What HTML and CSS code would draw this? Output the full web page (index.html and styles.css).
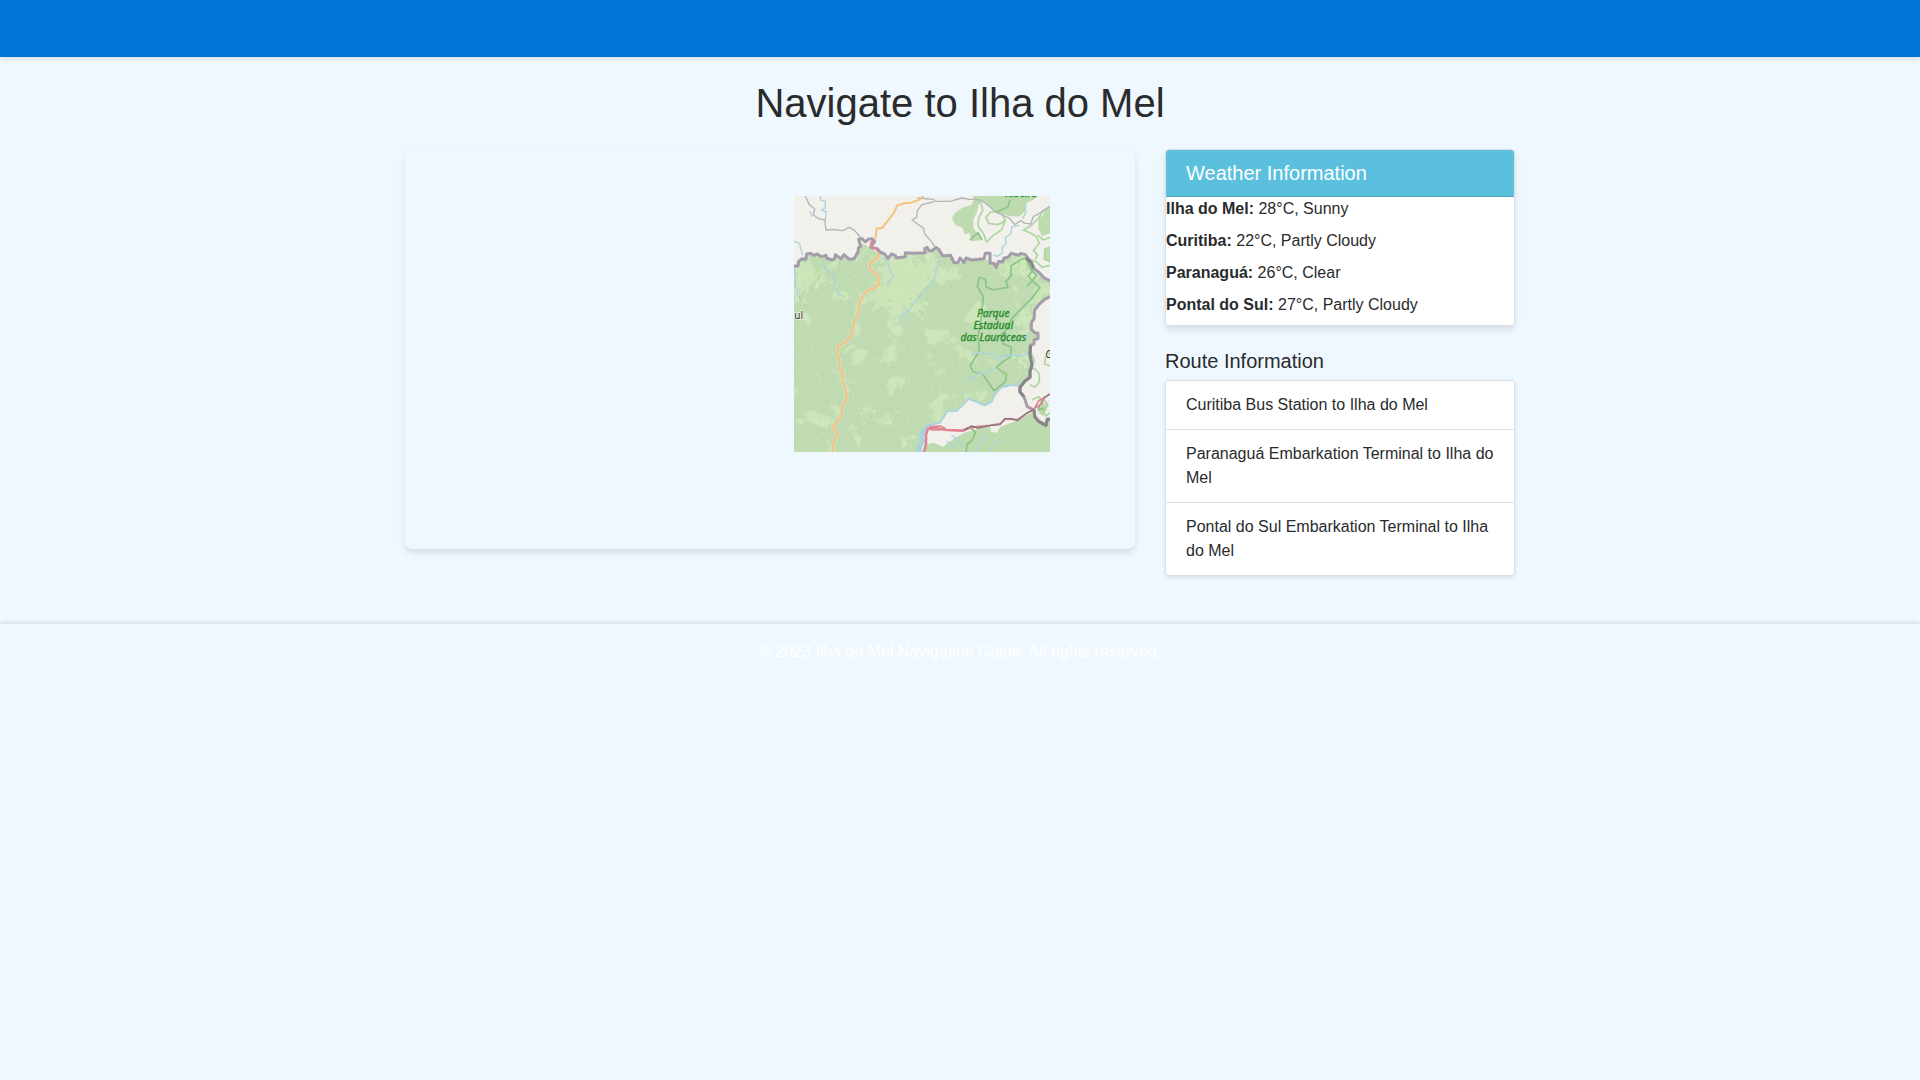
FILE: index.html
```html
<!DOCTYPE html>
<html lang="en">
<head>
<meta charset="utf-8">
<meta name="viewport" content="width=device-width, initial-scale=1">
<title>Navigate to Ilha do Mel</title>
<link rel="stylesheet" href="styles.css">
</head>
<body>
<nav class="navbar" aria-label="Main"></nav>

<main class="container">
  <h1 class="page-title">Navigate to Ilha do Mel</h1>
  <div class="columns">
    <div class="map">
      <svg class="map-tile" viewBox="42 48 768 768" role="img" aria-label="Map tile">
        <defs>
          <clipPath id="forest-clip">
            <path d="M42 257 L52 257 56 246 64 236 76 236 80 224 90 222 100 226 108 224 122 228 138 231 150 238 160 237 164 224 172 224 182 234 192 226 208 238 222 232 234 214 242 190 270 200 290 218 302 220 322 236 332 222 346 234 376 230 380 218 432 218 450 214 472 204 484 228 510 230 530 250 544 248 552 236 584 240 612 236 636 246 650 262 662 246 684 234 710 220 738 226 756 262 790 290 810 304 810 350 776 364 760 392 754 440 772 468 754 490 754 590 720 620 700 614 664 622 636 664 612 676 566 656 550 674 530 692 498 694 480 728 444 736 430 750 424 816 42 816Z"/>
          </clipPath>
          <filter id="patches" x="0" y="0" width="100%" height="100%" color-interpolation-filters="sRGB">
            <feTurbulence type="fractalNoise" baseFrequency="0.016" numOctaves="5" seed="8"/>
            <feColorMatrix values="0 0 0 0 .83  0 0 0 0 .92  0 0 0 0 .75  9 0 0 0 -5.4"/>
          </filter>
          <filter id="grain" x="0" y="0" width="100%" height="100%" color-interpolation-filters="sRGB">
            <feTurbulence type="fractalNoise" baseFrequency="0.12" numOctaves="3" seed="3"/>
            <feColorMatrix values="0 0 0 0 .80  0 0 0 0 .87  0 0 0 0 .75  4 0 0 0 -1.8"/>
          </filter>
          <filter id="ragged" x="-10%" y="-10%" width="120%" height="120%">
            <feTurbulence type="fractalNoise" baseFrequency="0.05" numOctaves="4" seed="5" result="n"/>
            <feDisplacementMap in="SourceGraphic" in2="n" scale="90" xChannelSelector="R" yChannelSelector="G"/>
          </filter>
        </defs>

        <rect class="land" x="42" y="48" width="768" height="768"/>

        <g clip-path="url(#forest-clip)">
          <rect class="forest" x="42" y="48" width="768" height="768"/>
          <rect x="42" y="180" width="768" height="636" filter="url(#grain)" opacity=".5"/>
          <g class="scrub" filter="url(#ragged)">
            <path d="M42 240 L62 238 96 250 122 286 150 300 142 318 110 300 82 330 60 362 42 356Z"/>
            <path d="M300 222 L380 226 390 244 440 232 480 220 486 240 470 280 440 318 414 350 374 400 340 396 320 366 286 390 272 350 298 318 306 270Z"/>
            <path d="M640 262 L720 230 748 262 700 270 690 290 660 286Z"/>
            <path d="M775 320 L810 306 810 348 776 364 758 390 752 450 720 480 712 440 728 410 746 370Z"/>
            <path d="M330 460 L354 462 348 490 334 480Z M250 340 L276 346 262 372 240 362Z M410 372 L436 376 430 404 414 396Z M246 196 L270 200 272 222 250 214Z"/>
            <path d="M700 530 L744 528 742 580 716 560Z M242 690 L272 672 280 690 250 712Z"/>
          </g>
          <rect x="42" y="180" width="768" height="636" filter="url(#patches)" opacity=".7"/>
        </g>

        <g class="forest">
          <path d="M546 84 L576 74 584 50 598 66 592 92 580 120 580 144 606 180 572 184 570 160 554 162 548 144 526 134 516 116 524 100Z"/>
          <path d="M580 48 L768 48 766 56 740 68 738 92 716 110 690 108 650 98 622 72 598 64Z"/>
          <path d="M810 82 L794 92 788 108 776 114 774 144 786 168 810 160Z"/>
          <path d="M792 206 L810 198 810 246 790 240Z"/>
          <path d="M436 816 L440 794 460 788 490 800 516 780 550 760 600 744 630 740 634 756 650 758 662 740 710 722 740 706 766 692 774 716 794 734 810 716 810 816Z"/>
          <path d="M774 684 L788 672 802 668 800 690 788 708 778 700Z"/>
        </g>

        <g class="trail">
          <path d="M580 50 L604 72 608 92 596 114 594 138 610 160 620 186 640 166 664 150 676 122 654 134 626 130 618 112 632 96 650 94 668 104 676 122"/>
          <path d="M810 82 L790 92 776 114 752 138 730 150 750 158 768 168 778 190 760 212 772 224 766 238"/>
          <path d="M810 172 L790 180 774 166 M810 210 L794 208 796 236 810 246 M810 256 L786 262 770 246 748 238"/>
          <path d="M754 520 L764 544 748 566 764 566 778 582 778 606 764 622 750 614 M810 518 L796 532 794 552 810 558"/>
          <path d="M756 660 L776 650 788 664 784 690 798 708 810 698 M790 654 L804 676 790 694"/>
        </g>
        <g class="park">
          <path d="M598 292 L592 318 610 350 606 390 602 430 594 470 598 510 584 536 570 558 580 576 606 580 642 632 676 606 680 584 648 562 668 546 692 530 694 502 670 492 664 464 680 448 694 418 720 390 756 354 780 322 760 306 744 288 756 276 738 234 720 240 692 258 694 286 678 304 684 322 640 330 618 320 616 298Z"/>
          <path d="M738 236 L754 268 770 286 758 300 742 318 M570 180 L594 158 606 180"/>
          <path d="M572 742 L586 758 576 782 562 792 558 816 M650 96 L684 80 690 60 M786 660 L774 690 794 684"/>
        </g>

        <g class="water">
          <path d="M120 48 L122 60 136 64 136 84 124 90 138 94 136 124 M90 94 L96 110"/>
          <path d="M42 184 L58 190 64 212 68 226 M44 260 L46 310 54 340 62 362"/>
          <path d="M128 244 L136 266 160 284 166 324 178 346 196 350"/>
          <path d="M308 232 L324 250 332 276 340 288 326 306 324 316"/>
          <path d="M482 234 L470 260 466 290 456 310 434 328 416 354 402 370 386 392 364 404 356 430"/>
          <path d="M734 72 L738 96 728 116 M718 136 L696 140 692 162 676 172 678 190 666 204 668 218 650 230 640 224"/>
          <path d="M572 528 L592 518 618 522 640 520 648 538 664 542 M556 600 L582 592 592 578 612 582 648 562"/>
          <path d="M670 540 L664 528 700 524 726 528 748 518 M664 474 L690 480 M750 456 L738 474 726 466"/>
          <path d="M514 764 L534 780 546 800 M616 766 L602 792 586 814 M662 776 L640 790 630 812 M500 784 L530 802"/>
          <path class="shore" d="M718 618 L698 614 664 622 642 644 636 664 614 676 566 656 548 676 530 692 502 694 480 728 444 736 430 748"/>
          <path class="river" d="M434 744 L424 770 428 784 418 800 420 816"/>
        </g>

        <g class="district">
          <path d="M76 48 L88 74 104 86 100 104 116 116 134 120 138 150 160 148 188 152 208 142 224 152 238 168 242 176"/>
          <path d="M412 54 L460 58 464 64 510 64 546 54 566 58 596 58 620 72 650 98 688 114 704 134 722 122 736 130 752 132 760 110 782 98 810 78"/>
          <path d="M460 66 L426 74 412 92 410 112 396 120 430 144 434 162 454 184 464 200"/>
        </g>

        <path class="road-edge" d="M298 220 L290 236 270 250 270 266 294 288 296 314 284 324 262 332 240 360 236 398 222 426 214 466 196 486 174 500 172 520 180 546 176 562 188 576 188 606 198 632 200 658 186 680 184 710 158 740 172 760 162 788 156 816"/>
        <g class="road">
          <path d="M430 48 L420 58 394 68 372 70 352 76 342 98 324 122 306 144 290 146 286 176"/>
          <path d="M298 220 L290 236 270 250 270 266 294 288 296 314 284 324 262 332 240 360 236 398 222 426 214 466 196 486 174 500 172 520 180 546 176 562 188 576 188 606 198 632 200 658 186 680 184 710 158 740 172 760 162 788 156 816"/>
        </g>

        <path class="border" d="M42 258 L54 258 56 244 66 236 78 238 80 222 92 220 102 226 112 222 124 230 138 226 140 234 156 240 164 236 166 224 182 236 192 224 208 238 222 236 234 216 236 202 242 200 236 178 246 176 256 186 264 178 276 176 284 184 272 202 292 206 300 216 314 222 324 236 334 222 346 226 348 234 376 230 376 218 400 220 436 218 434 206 442 202 446 212 456 212 468 202 478 210 488 228 512 226 522 248 534 248 540 234 552 248 558 234 574 240 596 238 612 236 616 220 630 220 630 250 642 250 648 262 656 244 668 246 672 234 684 232 694 220 716 226 722 220 736 224 754 248 762 266 778 278 790 292 800 298 810 302"/>
        <path class="border" d="M810 350 L794 358 778 372 764 390 762 416 754 428 754 448 764 458 774 460 774 476 762 480 762 492 750 496 750 524 756 556 750 574 750 592 736 602 720 622 720 636 732 650 742 680 762 690 764 710 776 724 798 736 802 718 810 718"/>
        <path class="border dark" d="M738 234 L754 248 760 264 M752 496 L750 524 756 556 750 574 750 592 736 602 720 622 720 636 732 650 M762 690 L764 710 776 724 798 736 802 718 810 718"/>

        <path class="highway thin" d="M284 178 L272 188 272 202 288 206 294 216"/>
        <path class="highway" d="M432 816 L438 792 438 764 444 746 464 744 500 750 548 752 566 744"/>
        <path class="highway thin" d="M440 754 L450 740 480 738 494 744 478 750 452 750 M566 746 L590 740 630 736 662 730 676 718 712 718 740 700 762 688 776 662 798 650 810 642 M766 684 L786 670 794 652"/>
        <path class="rail" d="M552 750 L574 738 594 744 634 736 660 734 674 716 694 716 712 722 740 700 762 688 M790 654 L810 642"/>

        <g class="park-label">
          <text x="640" y="411">Parque</text>
          <text x="640" y="447">Estadual</text>
          <text x="640" y="482">das Lauráceas</text>
          <text x="724" y="52">Ribeira</text>
        </g>
        <text class="town-label" x="43" y="417">ul</text>
        <text class="town-label slanted" x="796" y="534">C</text>
      </svg>
    </div>

    <aside class="sidebar">
      <section class="card">
        <h2 class="card-header">Weather Information</h2>
        <p class="weather"><strong>Ilha do Mel:</strong> 28°C, Sunny</p>
        <p class="weather"><strong>Curitiba:</strong> 22°C, Partly Cloudy</p>
        <p class="weather"><strong>Paranaguá:</strong> 26°C, Clear</p>
        <p class="weather"><strong>Pontal do Sul:</strong> 27°C, Partly Cloudy</p>
      </section>
      <section>
        <h2 class="section-title">Route Information</h2>
        <ul class="route-list">
          <li class="route">Curitiba Bus Station to Ilha do Mel</li>
          <li class="route">Paranaguá Embarkation Terminal to Ilha do Mel</li>
          <li class="route">Pontal do Sul Embarkation Terminal to Ilha do Mel</li>
        </ul>
      </section>
    </aside>
  </div>
</main>

<footer class="footer">
  <p class="copyright">© 2023 Ilha do Mel Navigation Guide. All rights reserved.</p>
</footer>
</body>
</html>
```
FILE: styles.css
```css
* {
  box-sizing: border-box;
}

body {
  margin: 0;
  background: #f0f8ff;
  color: #292b2c;
  font: 16px/24px "Liberation Sans", Arial, sans-serif;
}

h1, h2, p, ul {
  margin: 0;
  padding: 0;
  font-weight: 400;
}

.navbar {
  min-height: 57px;
  background: #0275d8;
  box-shadow: 0 2px 4px rgba(0, 0, 0, 0.1);
}

.container {
  max-width: 1140px;
  margin: 0 auto;
  padding: 24px 15px 48px;
}

.page-title {
  margin-bottom: 24px;
  font-size: 40px;
  line-height: 44px;
  text-align: center;
}

.columns {
  display: grid;
  grid-template-columns: minmax(0, 1fr) 350px;
  gap: 30px;
  align-items: start;
}

.map {
  position: relative;
  height: 400px;
  overflow: hidden;
  border-radius: 8px;
  box-shadow: 0 4px 6px rgba(0, 0, 0, 0.1);
}

.map-tile {
  position: absolute;
  top: 47px;
  left: 389px;
  width: 256px;
  height: 256px;
}

.card {
  margin-bottom: 24px;
  overflow: hidden;
  border: 1px solid #d9dfe4;
  border-radius: 4px;
  background: #fff;
  box-shadow: 0 4px 6px rgba(0, 0, 0, 0.1);
}

.card-header {
  padding: 12px 20px;
  border-bottom: 1px solid rgba(0, 0, 0, 0.125);
  background: #5bc0de;
  color: #fff;
  font-size: 20px;
  line-height: 22px;
}

.weather {
  margin-bottom: 8px;
}

.section-title {
  margin-bottom: 8px;
  font-size: 20px;
  line-height: 22px;
}

.route-list {
  list-style: none;
  border: 1px solid #dcdfe1;
  border-radius: 4px;
  background: #fff;
  box-shadow: 0 2px 4px rgba(0, 0, 0, 0.1);
}

.route {
  padding: 12px 20px;
}

.route + .route {
  border-top: 1px solid #dfdfdf;
}

.footer {
  padding: 16px;
  background: #f0f8ff;
  box-shadow: 0 -2px 4px rgba(0, 0, 0, 0.1);
  color: #fff;
  text-align: center;
}

.copyright {
  margin-bottom: 16px;
}

/* Map drawing */
.land { fill: #f1f0eb; }
.forest { fill: #bedbb0; }
.scrub { fill: #d1e9bb; opacity: 0.75; }

.trail, .park, .water, .district, .road, .road-edge, .border, .highway, .rail {
  fill: none;
  stroke-linejoin: round;
}

.trail { stroke: #aed5a0; stroke-width: 5; }
.park { stroke: #8ac486; stroke-width: 5; }
.water { stroke: #aad3df; stroke-width: 4; }
.shore { stroke-width: 6; }
.river { stroke-width: 15; }
.district { stroke: #b7b2b8; stroke-width: 4; }
.road { stroke: #f5c27c; stroke-width: 6; }
.road-edge { stroke: #d9dfc4; stroke-width: 11; }
.border { stroke: #a39dab; stroke-width: 9; }
.border.dark { stroke: #88848a; }
.highway { stroke: #e08495; stroke-width: 8; }
.highway.thin { stroke-width: 5; }
.rail { stroke: #7d7678; stroke-width: 4; }

.park-label {
  fill: #248c2c;
  stroke: #248c2c;
  stroke-width: 1px;
  font: italic 31px "Noto Sans", sans-serif;
  text-anchor: middle;
}

.town-label {
  fill: #333;
  stroke: #eef3e8;
  stroke-width: 4px;
  paint-order: stroke;
  font: 30px "Noto Sans", sans-serif;
}

.town-label.slanted { font-style: italic; }
```
